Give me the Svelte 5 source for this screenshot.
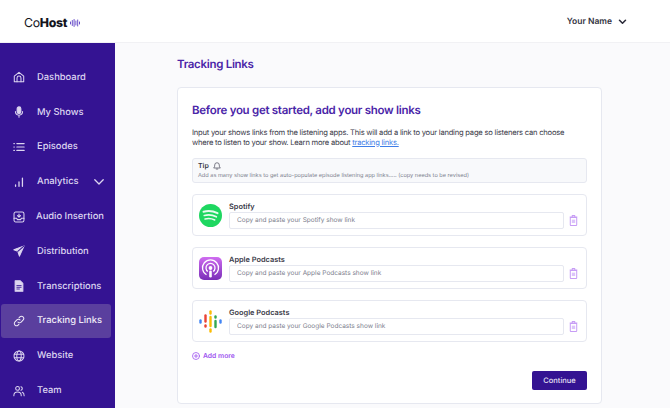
<script>
	const nav = [
		{ label: 'Dashboard', icon: 'home' },
		{ label: 'My Shows', icon: 'mic' },
		{ label: 'Episodes', icon: 'list' },
		{ label: 'Analytics', icon: 'bars', caret: true },
		{ label: 'Audio Insertion', icon: 'inbox' },
		{ label: 'Distribution', icon: 'send' },
		{ label: 'Transcriptions', icon: 'doc' },
		{ label: 'Tracking Links', icon: 'link', active: true },
		{ label: 'Website', icon: 'globe' },
		{ label: 'Team', icon: 'team' }
	];

	const shows = [
		{ name: 'Spotify', logo: 'spotify' },
		{ name: 'Apple Podcasts', logo: 'apple' },
		{ name: 'Google Podcasts', logo: 'google' }
	];
</script>

<div class="page">
	<header class="topbar">
		<div class="logo">
			<span class="co">Co</span><span class="host">Host</span>
			<svg width="10" height="8" viewBox="0 0 10 8" aria-hidden="true" stroke="#5b3fc4" stroke-width=".9" stroke-linecap="round">
				<path d="M.5 3v2M2.300 1.500v5M4.100.5v7M5.900 2v4M7.700 1v6M9.500 3v2"></path>
			</svg>
		</div>
		<div class="user">
			<span>Your Name</span>
			<svg width="9" height="6" viewBox="0 0 10 7" fill="none" stroke="#2b2b3a" stroke-width="1.800" stroke-linecap="round" stroke-linejoin="round" aria-hidden="true">
				<path d="M1.500 1.500 5 5l3.500-3.500"></path>
			</svg>
		</div>
	</header>

	<div class="body">
		<nav class="sidebar">
			{#each nav as item (item.label)}
				<div class="nav-item" class:active={item.active}>
					<svg class="nav-icon" width="12" height="12" viewBox="0 0 14 14" fill="none" stroke="currentColor" stroke-width="1.200" stroke-linecap="round" stroke-linejoin="round" aria-hidden="true">
						{#if item.icon === 'home'}
							<path d="M1.500 6 7 1.500 12.500 6v6.500h-11z"></path>
							<path d="M4.700 12.500V8.200a2.300 2.300 0 0 1 4.600 0v4.300"></path>
						{:else if item.icon === 'mic'}
							<rect x="4.800" y="1" width="4.400" height="8" rx="2.200" fill="currentColor"></rect>
							<path d="M2.800 6.500a4.200 4.200 0 0 0 8.400 0M7 10.800V13"></path>
						{:else if item.icon === 'list'}
							<path d="M4.500 3h8.500M4.500 7h8.500M4.500 11h8.500" stroke-width="1.400"></path>
							<path d="M1 3h.6M1 7h.6M1 11h.6" stroke-width="1.400"></path>
						{:else if item.icon === 'bars'}
							<path d="M3 12v-1.500M7 12V7M11 12V2.500" stroke-width="1.500"></path>
						{:else if item.icon === 'inbox'}
							<rect x="1.200" y="1.200" width="11.600" height="11.600" rx="2"></rect>
							<path d="M1.200 8.500h3l1 1.500h3.600l1-1.500h3M7 3.500v3.500M5.200 5.500 7 7.200l1.800-1.700" stroke-width="1.300"></path>
						{:else if item.icon === 'send'}
							<path d="M13 1 1 5.500l4.600 1.900L7.500 13z" fill="currentColor"></path>
							<path d="M13 1 5.600 7.400" stroke="#341392"></path>
						{:else if item.icon === 'doc'}
							<path d="M2.500 1h6l3 3v9h-9z" fill="currentColor"></path>
							<path d="M4.500 6.500h5M4.500 8.500h5M4.500 10.500h3" stroke="#341392" stroke-width="1"></path>
						{:else if item.icon === 'link'}
							<path d="M5.800 8.200a2.600 2.600 0 0 0 3.700 0l2.200-2.200a2.600 2.600 0 0 0-3.700-3.700l-1 1"></path>
							<path d="M8.200 5.800a2.600 2.600 0 0 0-3.700 0L2.300 8a2.600 2.600 0 0 0 3.700 3.700l1-1"></path>
						{:else if item.icon === 'globe'}
							<circle cx="7" cy="7" r="5.800"></circle>
							<ellipse cx="7" cy="7" rx="2.600" ry="5.800"></ellipse>
							<path d="M1.500 5h11M1.500 9h11"></path>
						{:else if item.icon === 'team'}
							<circle cx="5.300" cy="4" r="2.200"></circle>
							<path d="M1 12.500c0-2.800 1.800-4.300 4.300-4.300s4.300 1.500 4.300 4.300M9.300 2a2.200 2.200 0 0 1 0 4.200M10.800 8.500c1.400.5 2.200 1.900 2.200 4"></path>
						{/if}
					</svg>
					<span class="nav-label" class:tight={item.icon === 'inbox'}>{item.label}</span>
					{#if item.caret}
						<svg class="caret" width="10" height="6" viewBox="0 0 10 6" fill="none" stroke="currentColor" stroke-width="1.300" stroke-linecap="round" stroke-linejoin="round" aria-hidden="true">
							<path d="M.8.8 5 5 9.200.8"></path>
						</svg>
					{/if}
				</div>
			{/each}
		</nav>

		<main class="content">
			<h1>Tracking Links</h1>
			<section class="card">
				<h2>Before you get started, add your show links</h2>
				<p class="intro">
					Input your shows links from the listening apps. This will add a link to your landing page so listeners can choose<br />
					where to listen to your show. Learn more about <a href="#tracking">tracking links.</a>
				</p>

				<div class="tip">
					<div class="tip-title">
						Tip
						<svg width="8" height="9" viewBox="0 0 9 10" fill="none" stroke="#4a4a5a" stroke-width=".8" stroke-linecap="round" stroke-linejoin="round" aria-hidden="true">
							<path d="M1 7.500c.7-.7.9-1.300.9-3a2.600 2.600 0 0 1 5.200 0c0 1.700.2 2.300.9 3zM3.600 9h1.800"></path>
						</svg>
					</div>
					<div class="tip-text">Add as many show links to get auto-populate episode listening app links..... (copy needs to be revised)</div>
				</div>

				{#each shows as show (show.name)}
					<div class="show">
						<div class="show-logo">
							{#if show.logo === 'spotify'}
								<svg width="23" height="23" viewBox="0 0 23 23" fill="none" aria-hidden="true">
									<circle cx="11.500" cy="11.500" r="11.500" fill="#1ed760"></circle>
									<g stroke="#e9fbef" stroke-linecap="round">
										<path d="M4.500 7.800c4.500-1.200 9.500-.8 14 1.400" stroke-width="2"></path>
										<path d="M5.300 11.500c4-1 8.300-.6 12 1.300" stroke-width="1.700"></path>
										<path d="M6 15c3.300-.8 6.800-.5 9.800 1" stroke-width="1.400"></path>
									</g>
								</svg>
							{:else if show.logo === 'apple'}
								<svg width="23" height="23" viewBox="0 0 23 23" fill="none" aria-hidden="true">
									<defs>
										<linearGradient id="apple-bg" x1="0" y1="0" x2="0" y2="1">
											<stop offset="0" stop-color="#cf6cf0"></stop>
											<stop offset="1" stop-color="#7a2fb8"></stop>
										</linearGradient>
									</defs>
									<rect width="23" height="23" rx="5" fill="url(#apple-bg)"></rect>
									<g stroke="#fff" stroke-width="1.300">
										<path d="M7.500 17.800a8 8 0 1 1 8 0"></path>
										<path d="M8.800 14.500a4.500 4.500 0 1 1 5.400 0"></path>
									</g>
									<circle cx="11.500" cy="11" r="1.900" fill="#fff"></circle>
									<rect x="10.200" y="13.500" width="2.600" height="7" rx="1.300" fill="#fff"></rect>
								</svg>
							{:else}
								<svg width="23" height="23" viewBox="0 0 23 23" fill="none" stroke-width="2.400" stroke-linecap="round" aria-hidden="true">
									<path d="M1.500 10.500v2" stroke="#4285f4"></path>
									<path d="M6.500 5.500v6" stroke="#ea4335"></path>
									<path d="M6.500 15.500v1" stroke="#ea4335"></path>
									<path d="M11.500 1.500v2" stroke="#fbbc04"></path>
									<path d="M11.500 7v9" stroke="#fbbc04"></path>
									<path d="M11.500 19.500v2" stroke="#fbbc04"></path>
									<path d="M16.500 6.500v1" stroke="#34a853"></path>
									<path d="M16.500 11v6" stroke="#34a853"></path>
									<path d="M21.500 10.500v2" stroke="#4285f4"></path>
								</svg>
							{/if}
						</div>
						<div class="show-main">
							<div class="show-name">{show.name}</div>
							<div class="show-line">
								<input type="text" placeholder="Copy and paste your {show.name} show link" />
								<svg width="9" height="11" viewBox="0 0 10 13" fill="none" stroke="#c79df5" stroke-width="1.200" stroke-linejoin="round" aria-hidden="true">
									<path d="M1.200 3h7.600v8.500a1 1 0 0 1-1 1H2.200a1 1 0 0 1-1-1zM.5 2.500h9M3.500 2.300V.7h3v1.600"></path>
									<rect x="3" y="5.500" width="4" height="4" fill="#dcc4fa" stroke="none"></rect>
								</svg>
							</div>
						</div>
					</div>
				{/each}

				<div class="add-more">
					<svg width="8" height="8" viewBox="0 0 8 8" fill="none" stroke="#a056f0" stroke-width=".8" stroke-linecap="round" aria-hidden="true">
						<circle cx="4" cy="4" r="3.500"></circle>
						<path d="M4 2.400v3.200M2.400 4h3.200"></path>
					</svg>
					Add more
				</div>

				<div class="actions">
					<button type="button">Continue</button>
				</div>
			</section>
		</main>
	</div>
</div>

<style>
	:global(body) {
		margin: 0;
		background: #fafafc;
		overflow: hidden;
	}

	.page {
		width: 670px;
		height: 408px;
		display: flex;
		flex-direction: column;
		overflow: hidden;
		font-family: Inter, 'Noto Sans', sans-serif;
		text-rendering: geometricPrecision;
	}

	.topbar {
		flex: 0 0 43px;
		display: flex;
		align-items: center;
		justify-content: space-between;
		padding: 3px 43px 0 24px;
		box-sizing: border-box;
		background: #fff;
		border-bottom: 1px solid #f1f1f4;
	}

	.logo {
		display: flex;
		align-items: center;
		font-size: 12.3px;
		letter-spacing: -0.3px;
		color: #14141c;
	}

	.host {
		font-weight: 800;
	}

	.logo svg {
		margin-left: 3px;
	}

	.user {
		display: flex;
		align-items: center;
		gap: 6px;
		font-size: 8.5px;
		font-weight: 600;
		color: #33333f;
		margin-top: -1px;
	}

	.body {
		flex: 1;
		display: flex;
		min-height: 0;
	}

	.sidebar {
		flex: 0 0 115px;
		box-sizing: border-box;
		background: #341392;
		padding-top: 17px;
		display: flex;
		flex-direction: column;
	}

	.nav-item {
		height: 34.8px;
		flex: none;
		display: flex;
		align-items: center;
		margin: 0 4px 0 1px;
		padding-left: 12px;
		color: #dcd5f0;
		border-radius: 3px;
		font-size: 9.4px;
		font-weight: 500;
	}

	.nav-item.active {
		background: #5a3f9e;
		color: #efebf8;
	}

	.nav-label {
		margin-left: 12px;
		white-space: nowrap;
	}

	.nav-label.tight {
		margin-left: 11px;
	}

	.caret {
		margin-left: 15px;
		flex: none;
	}

	.content {
		flex: 1;
		padding: 0 68px 0 62px;
		min-width: 0;
	}

	h1 {
		margin: 14px 0 15px;
		font-size: 11.5px;
		line-height: 15px;
		font-weight: 600;
		letter-spacing: -0.3px;
		color: #4a25a8;
	}

	.card {
		box-sizing: border-box;
		height: 317px;
		padding: 15px 14px 0;
		background: #fff;
		border: 1px solid #e6e8f0;
		border-radius: 4px;
	}

	h2 {
		margin: 0 0 10px;
		font-size: 11.5px;
		line-height: 15px;
		font-weight: 600;
		letter-spacing: -0.28px;
		color: #4a25a8;
	}

	.intro {
		margin: 0 0 11px;
		font-size: 7.6px;
		line-height: 9.5px;
		letter-spacing: -0.22px;
		color: #3a3a48;
		white-space: nowrap;
	}

	.intro a {
		color: #3f7ee8;
		text-decoration: underline;
	}

	.tip {
		box-sizing: border-box;
		height: 25px;
		padding: 2px 5px;
		background: #f8f9fb;
		border: 1px solid #e6e8f0;
		border-radius: 3px;
		margin-bottom: 11px;
	}

	.tip-title {
		display: flex;
		align-items: center;
		gap: 4px;
		font-size: 7px;
		line-height: 9px;
		font-weight: 600;
		color: #3a3a48;
	}

	.tip-text {
		margin-top: 3px;
		font-size: 5.6px;
		line-height: 7px;
		color: #7a7d8c;
	}

	.show {
		box-sizing: border-box;
		height: 42px;
		margin-bottom: 11px;
		display: flex;
		align-items: center;
		background: #fff;
		border: 1px solid #e6e8f0;
		border-radius: 4px;
		padding: 0 8px 0 6px;
	}

	.show-logo {
		flex: 0 0 23px;
		height: 23px;
		margin-right: 7px;
	}

	.show-main {
		flex: 1;
		min-width: 0;
	}

	.show-name {
		font-size: 7.4px;
		line-height: 9px;
		font-weight: 600;
		color: #3a3a48;
		margin-bottom: 1px;
	}

	.show-line {
		display: flex;
		align-items: center;
		gap: 5px;
	}

	input {
		flex: 1;
		min-width: 0;
		box-sizing: border-box;
		height: 17px;
		padding: 0 7px;
		border: 1px solid #e6e8f0;
		border-radius: 2px;
		background: #fff;
		font: 400 6.5px Inter, 'Noto Sans', sans-serif;
		text-rendering: geometricPrecision;
	}

	input::placeholder {
		color: #7d808e;
		opacity: 1;
	}

	.add-more {
		display: flex;
		align-items: center;
		gap: 3px;
		margin-top: -2px;
		font-size: 6.8px;
		line-height: 9px;
		font-weight: 600;
		color: #a056f0;
	}

	.actions {
		display: flex;
		justify-content: flex-end;
		margin-top: 11px;
	}

	button {
		width: 55px;
		height: 19px;
		padding: 0;
		border: none;
		border-radius: 2px;
		background: #341392;
		color: #e8e4f4;
		font: 500 7.5px Inter, 'Noto Sans', sans-serif;
		text-rendering: geometricPrecision;
	}
</style>
